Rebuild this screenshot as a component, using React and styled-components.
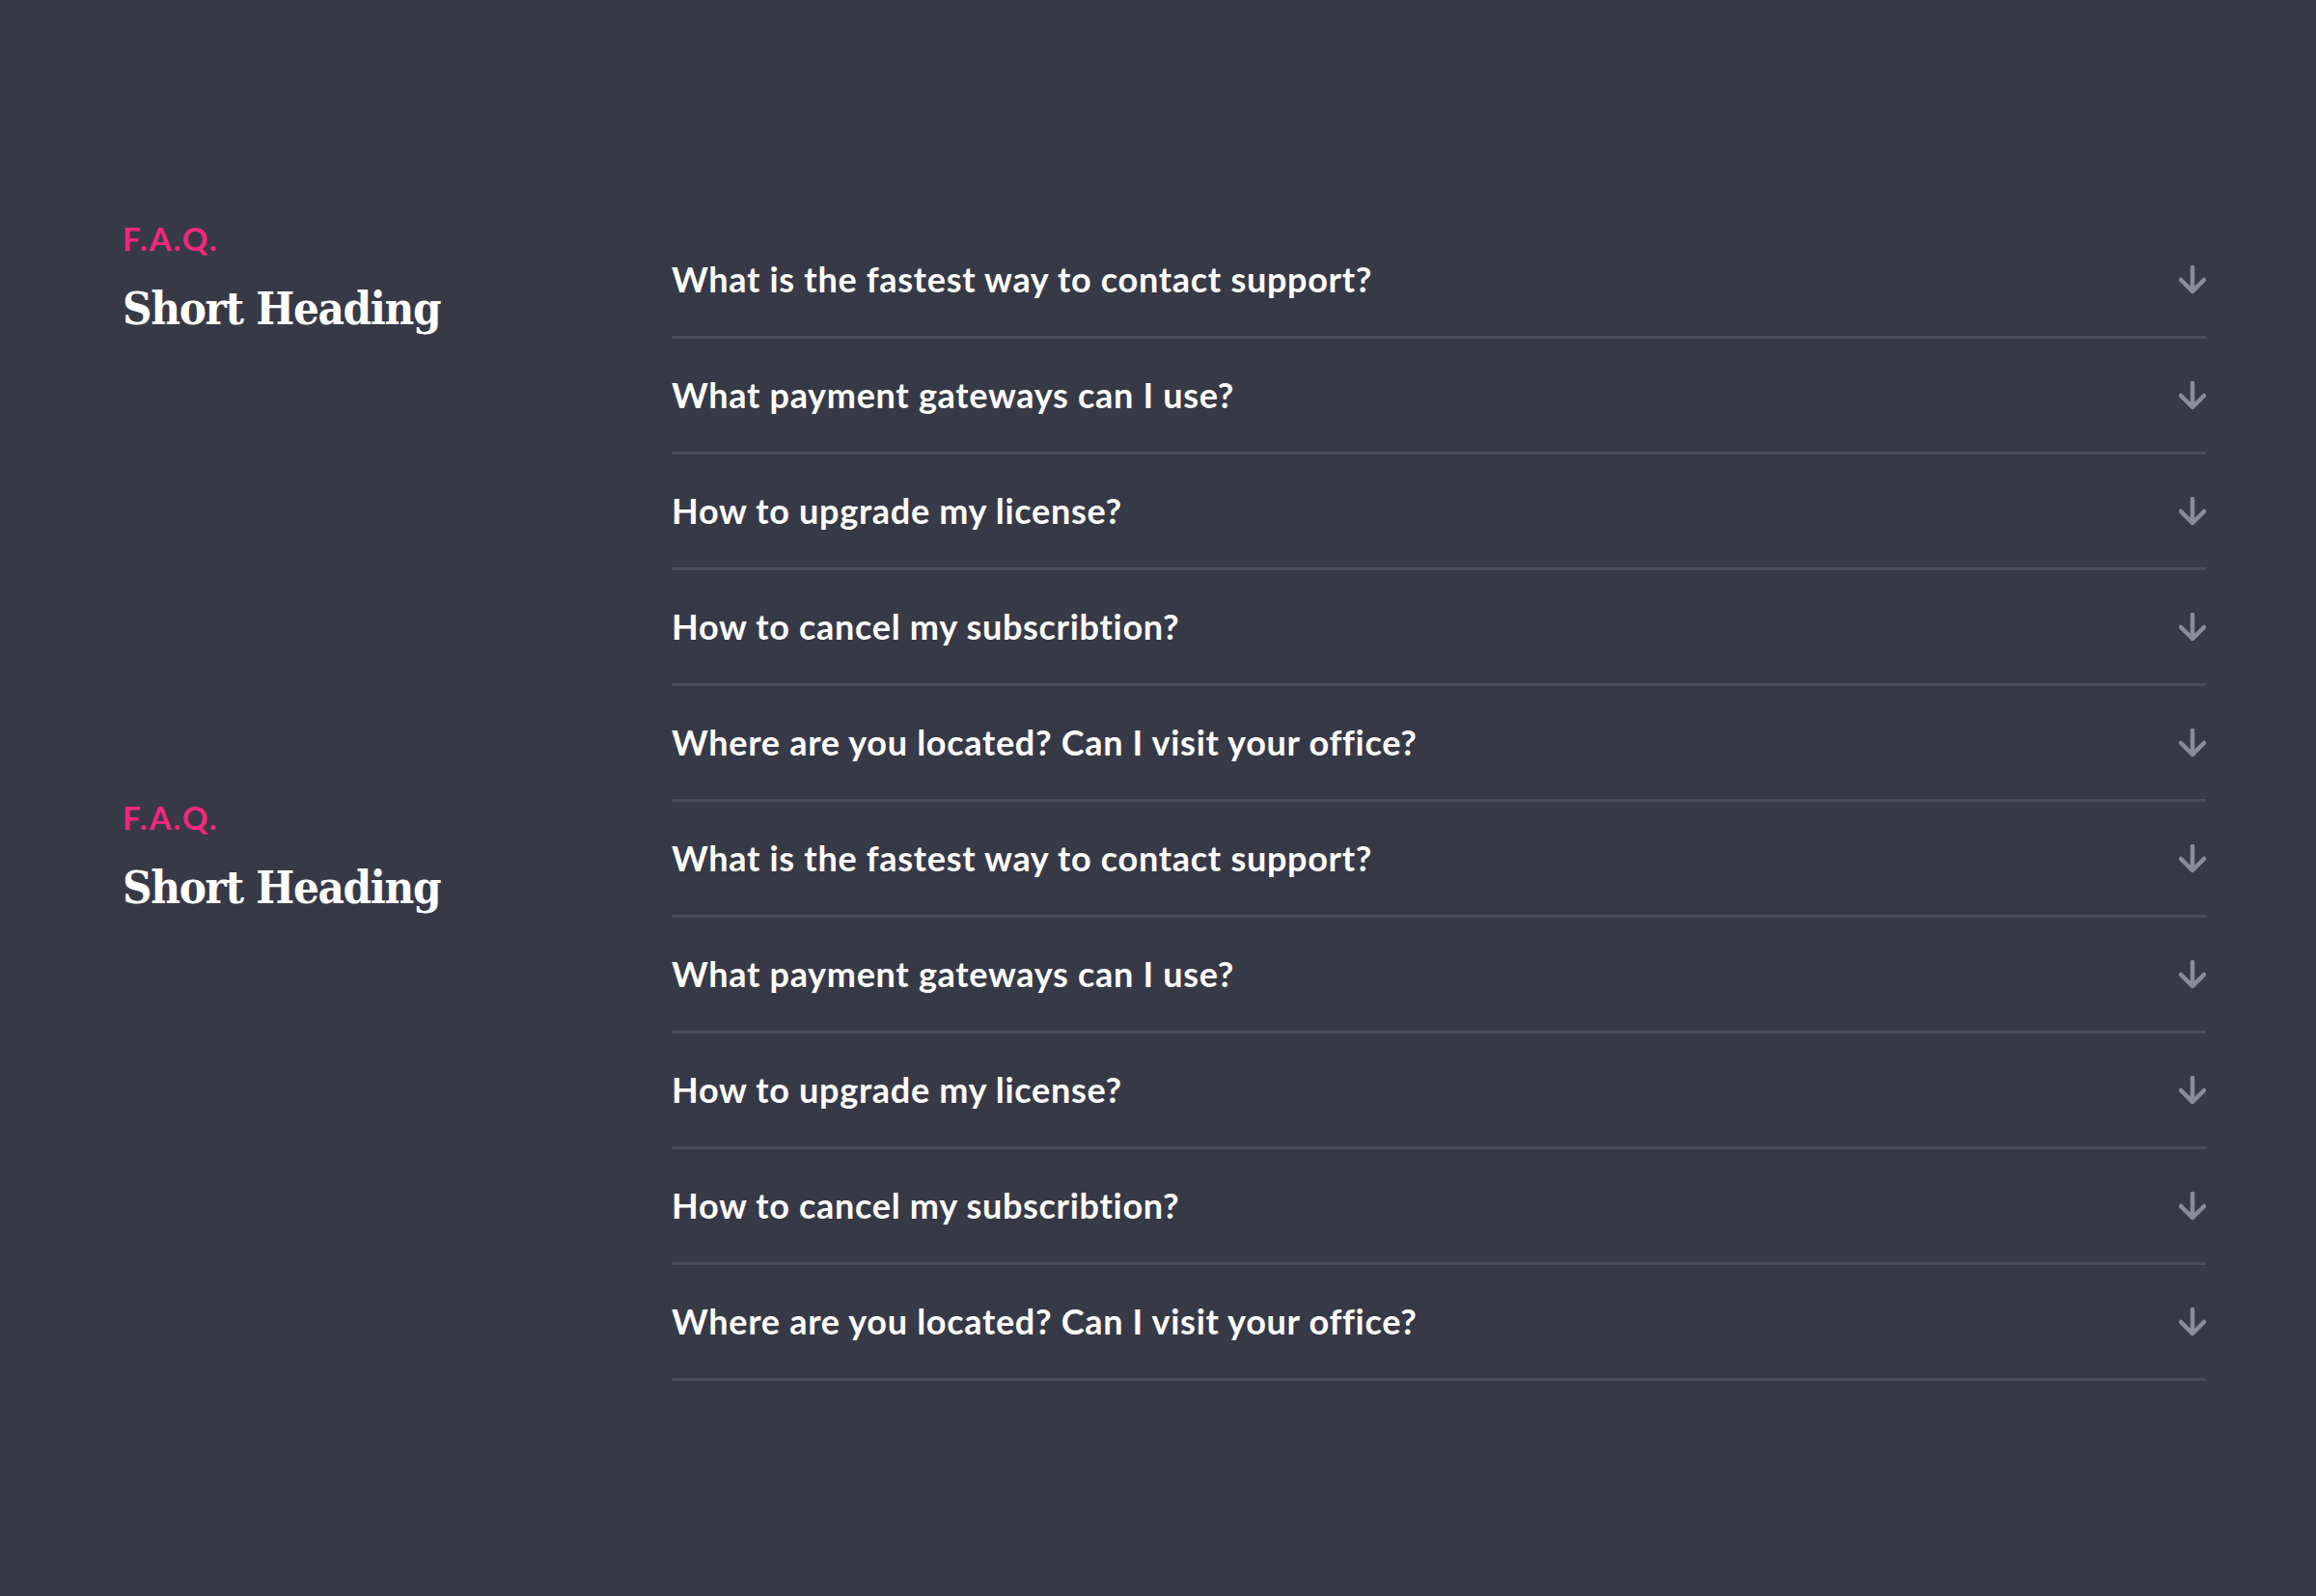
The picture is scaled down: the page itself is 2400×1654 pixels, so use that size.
import React from "react";
import styled, {createGlobalStyle} from "styled-components";

const color = {
  bg: "#383946",
  pink: "#f2277d",
  white: "#ffffff",
  line: "#4b4c59",
  arrow: "#8b8c99",
};

const GlobalStyle = createGlobalStyle`
  html, body {
    margin: 0;
    padding: 0;
    background: ${color.bg};
  }
  body {
    min-height: 1654px;
    font-family: "Lato", "Noto Sans", sans-serif;
  }
`;

const StyledPage = styled.main`
  box-sizing: border-box;
  min-height: 1654px;
  padding: 231px 114px 0 127px;
  background: ${color.bg};
`;

const StyledSection = styled.section`
  display: grid;
  grid-template-columns: 569px 1fr;
`;

const StyledIntro = styled.header`
  display: flex;
  flex-direction: column;
`;

const StyledLabel = styled.span`
  font-family: "Lato", sans-serif;
  font-weight: 700;
  font-size: 33px;
  line-height: 1;
  letter-spacing: 2px;
  color: ${color.pink};
`;

const StyledHeading = styled.h2`
  margin: 32px 0 0;
  font-family: "DejaVu Serif Condensed", "DejaVu Serif", serif;
  font-stretch: condensed;
  font-weight: 700;
  font-size: 47px;
  line-height: 1;
  letter-spacing: -1.3px;
  color: ${color.white};
`;

const StyledList = styled.ul`
  margin: 0;
  padding: 0;
  list-style: none;
`;

const StyledItem = styled.li`
  display: flex;
  align-items: center;
  justify-content: space-between;
  height: 117px;
  border-bottom: 3px solid ${color.line};
`;

const StyledQuestion = styled.span`
  font-family: "Lato", sans-serif;
  font-weight: 700;
  font-size: 36px;
  letter-spacing: 0.7px;
  color: ${color.white};
  transform: translateY(-1px);
`;

const ArrowIcon = () => (
  <svg width="28" height="30" viewBox="0 0 28 30" fill="none">
    <path
      d="M14 2V27M2 15L14 27L26 15"
      stroke={color.arrow}
      strokeWidth="4.5"
      strokeLinecap="round"
      strokeLinejoin="round"
    />
  </svg>
);

const questions = [
  "What is the fastest way to contact support?",
  "What payment gateways can I use?",
  "How to upgrade my license?",
  "How to cancel my subscribtion?",
  "Where are you located? Can I visit your office?",
];

const FaqSection = ({items}) => (
  <StyledSection>
    <StyledIntro>
      <StyledLabel>F.A.Q.</StyledLabel>
      <StyledHeading>Short Heading</StyledHeading>
    </StyledIntro>
    <StyledList>
      {items.map(question => (
        <StyledItem key={question}>
          <StyledQuestion>{question}</StyledQuestion>
          <ArrowIcon />
        </StyledItem>
      ))}
    </StyledList>
  </StyledSection>
);

const App = () => (
  <>
    <GlobalStyle />
    <StyledPage>
      <FaqSection items={questions} />
      <FaqSection items={questions} />
    </StyledPage>
  </>
);

export default App;
